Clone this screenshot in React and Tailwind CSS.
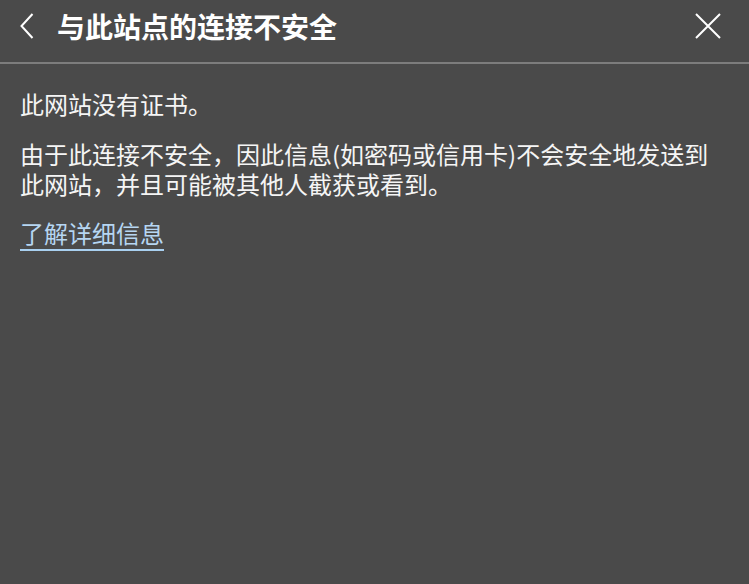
const BackIcon = () => (
  <svg width="14" height="26" viewBox="0 0 14 26" fill="none" stroke="currentColor" strokeWidth="2">
    <path d="M12.5 1 L1.5 13 L12.5 25" />
  </svg>
);

const CloseIcon = () => (
  <svg width="26" height="26" viewBox="0 0 26 26" fill="none" stroke="currentColor" strokeWidth="2">
    <path d="M1 1 L25 25 M25 1 L1 25" />
  </svg>
);

export default function App() {
  return (
    <div className="h-[584px] w-[749px] bg-[#4a4a4a] text-white font-['Noto_Sans_CJK_SC','Noto_Sans',sans-serif] overflow-hidden">
      <div className="flex h-[62px] items-center justify-between pb-[11px] pl-[20px] pr-[28px]">
        <div className="flex items-center">
          <button className="text-white">
            <BackIcon />
          </button>
          <h1 className="ml-[23px] text-[28px] font-bold leading-[36px]">与此站点的连接不安全</h1>
        </div>
        <button className="text-white">
          <CloseIcon />
        </button>
      </div>
      <div className="h-[2px] bg-[#7d7d7d]"></div>

      <div className="px-[20px] pt-[25px] text-[24px] leading-[30px] text-[#f5f5f5]">
        <p>此网站没有证书。</p>
        <p className="mt-[20px]">由于此连接不安全，因此信息(如密码或信用卡)不会安全地发送到此网站，并且可能被其他人截获或看到。</p>
        <a href="#" className="mt-[19px] inline-block border-b-2 border-[#a9d0f0] pb-[1px] text-[#b6d6f2]">
          了解详细信息
        </a>
      </div>
    </div>
  );
}
